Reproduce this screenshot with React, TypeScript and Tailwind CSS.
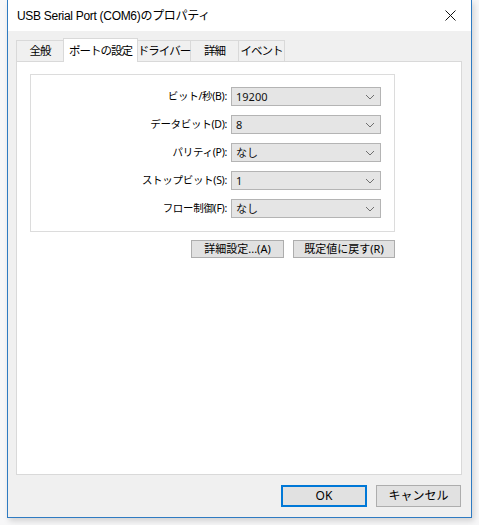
import React from 'react'

const rows = [
  { label: 'ビット/秒(B):', value: '19200' },
  { label: 'データビット(D):', value: '8' },
  { label: 'パリティ(P):', value: 'なし' },
  { label: 'ストップビット(S):', value: '1' },
  { label: 'フロー制御(F):', value: 'なし' },
]

const tabs = ['全般', 'ポートの設定', 'ドライバー', '詳細', 'イベント']

const font = { fontFamily: '"Noto Sans", "Noto Sans CJK JP", sans-serif' }
const titleFont = { fontFamily: '"Liberation Sans", "Noto Sans CJK JP", sans-serif' }

function Chevron() {
  return (
    <svg width="10" height="6" viewBox="0 0 10 6" className="shrink-0">
      <path d="M1 1l4 4 4-4" fill="none" stroke="#707070" strokeWidth="1" />
    </svg>
  )
}

function Select({ value }: { value: string }) {
  return (
    <div className="flex h-[19px] w-[150px] items-center justify-between border border-[#b4b4b4] bg-[#e5e5e5] pl-[4px] pr-[5px] text-[11px] text-[#111]">
      <span className="leading-none">{value}</span>
      <Chevron />
    </div>
  )
}

export default function App() {
  return (
    <div
      className="h-[525px] w-[479px] overflow-hidden bg-[#f7f7f8] text-black"
      style={font}
    >
      {/* dialog window */}
      <div className="ml-[7px] flex h-[518px] w-[465px] flex-col border-x border-b border-[#2f7bc2] bg-[#f0f0f0] shadow-[2px_3px_6px_rgba(0,0,0,0.15)]">
        {/* title bar */}
        <div className="flex h-[31px] items-center justify-between bg-white pl-[9px] pr-[15px]">
          <span className="text-[12px] leading-none tracking-[-0.3px]" style={titleFont}>
            USB Serial Port (COM6)のプロパティ
          </span>
          <svg width="11" height="11" viewBox="0 0 11 11">
            <path d="M0.5 0.5l10 10M10.5 0.5l-10 10" stroke="#111" strokeWidth="1" />
          </svg>
        </div>

        <div className="flex flex-1 flex-col pl-[8px] pr-[9px] pt-[7px]">
          {/* tabs */}
          <div className="relative z-10 flex h-[23px] items-end whitespace-nowrap text-[11.5px] tracking-[-1px]">
            {tabs.map((t, i) =>
              i === 1 ? (
                <div
                  key={t}
                  className="-mb-px flex h-[24px] w-[75px] items-center justify-center border-x border-t border-[#d9d9d9] bg-white"
                >
                  {t}
                </div>
              ) : (
                <div
                  key={t}
                  className={`flex h-[21px] items-center justify-center border-t border-[#d9d9d9] bg-[#f0f0f0] ${
                    i === 0 ? 'w-[47px] border-l' : i === 2 ? 'w-[53px] border-r' : i === 3 ? 'w-[48px] border-r' : 'w-[46px] border-r'
                  }`}
                >
                  {t}
                </div>
              )
            )}
          </div>

          {/* tab panel */}
          <div className="h-[414px] border border-[#d9d9d9] bg-white pl-[13px] pt-[12px]">
            <div className="flex h-[158px] w-[365px] flex-col gap-[9px] border border-[#dcdcdc] pt-[12px]">
              {rows.map((r) => (
                <div key={r.label} className="flex items-center justify-end pr-[13px]">
                  <span className="mr-[4px] whitespace-nowrap text-[10.5px] tracking-[-0.3px]">{r.label}</span>
                  <Select value={r.value} />
                </div>
              ))}
            </div>
            <div className="mt-[8px] flex w-[365px] justify-end gap-[9px] whitespace-nowrap text-[11px]">
              <div className="flex h-[18px] w-[93px] items-center justify-center border border-[#adadad] bg-[#e1e1e1]">
                詳細設定...(A)
              </div>
              <div className="flex h-[18px] w-[102px] items-center justify-center border border-[#adadad] bg-[#e1e1e1]">
                既定値に戻す(R)
              </div>
            </div>
          </div>

          {/* bottom buttons */}
          <div className="mt-[10px] flex justify-end gap-[9px] pr-px text-[12px]">
            <div className="flex h-[22px] w-[86px] items-center justify-center border-2 border-[#0078d7] bg-[#e1e1e1]">
              OK
            </div>
            <div className="flex h-[22px] w-[85px] items-center justify-center border border-[#adadad] bg-[#e1e1e1]">
              キャンセル
            </div>
          </div>
        </div>
      </div>
    </div>
  )
}
